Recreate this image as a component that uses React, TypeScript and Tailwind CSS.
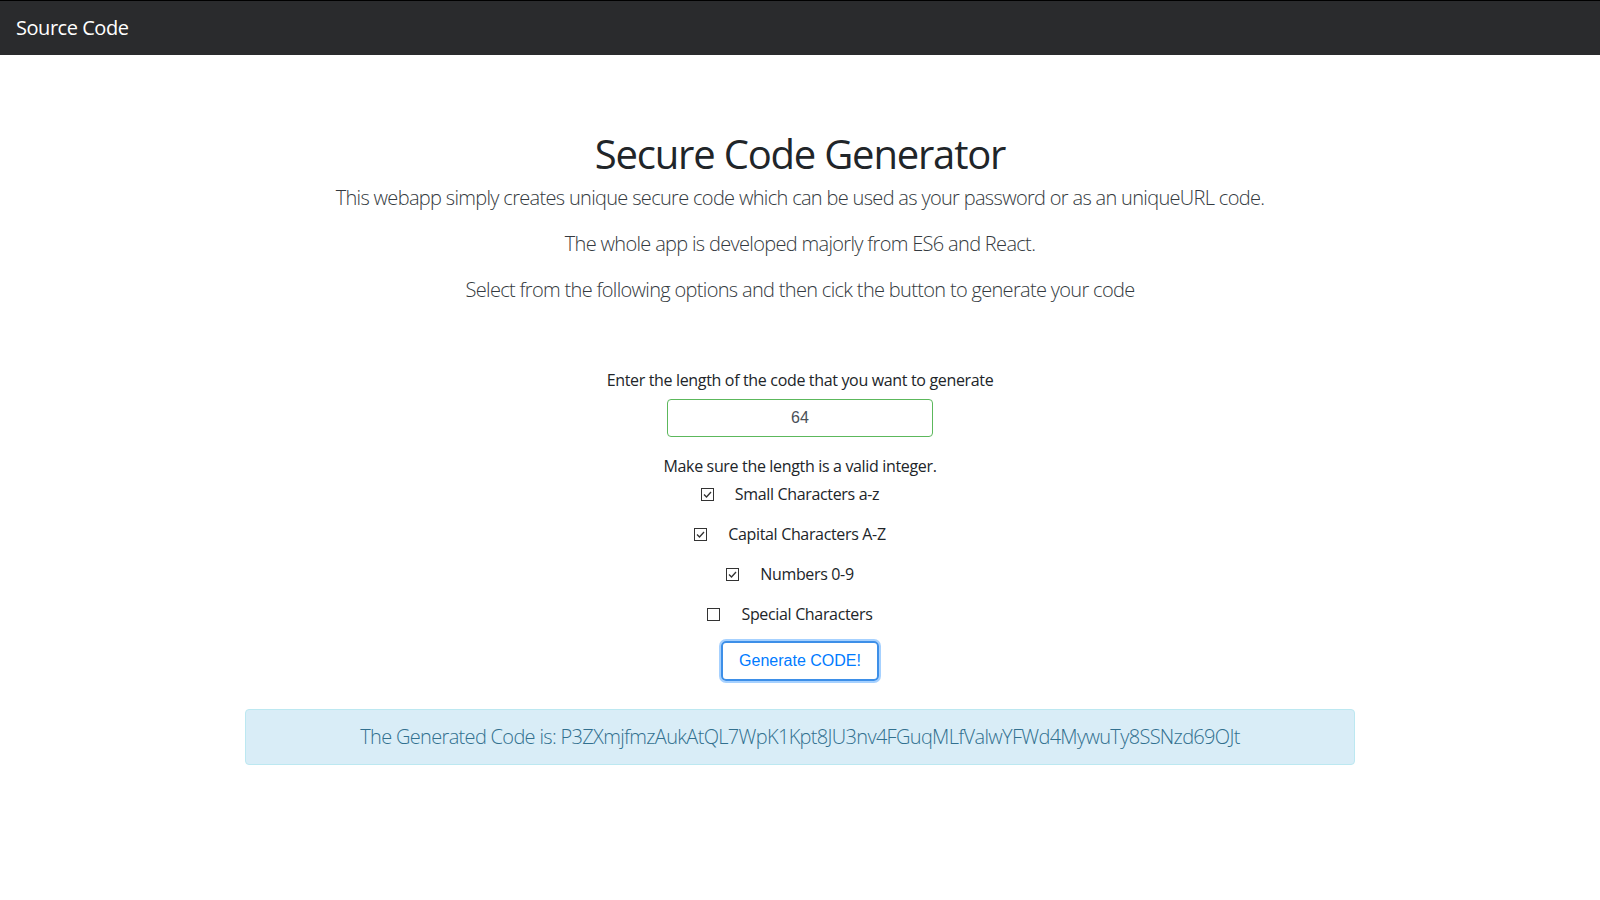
import React, { useState } from 'react'

const options = [
  { id: 'small', label: 'Small Characters a-z', checked: true },
  { id: 'capital', label: 'Capital Characters A-Z', checked: true },
  { id: 'numbers', label: 'Numbers 0-9', checked: true },
  { id: 'special', label: 'Special Characters', checked: false },
]

const CheckBox: React.FC<{ checked: boolean }> = ({ checked }) => (
  <span className="flex h-[13px] w-[13px] items-center justify-center border border-[#333] bg-white">
    {checked && (
      <svg viewBox="0 0 11 11" className="h-[11px] w-[11px]">
        <path d="M2 5.5 L4.5 8 L9 3" fill="none" stroke="#333" strokeWidth="1.3" />
      </svg>
    )}
  </span>
)

const App: React.FC = () => {
  const [length, setLength] = useState('64')
  const [opts, setOpts] = useState(options)

  return (
    <div className="min-h-screen bg-white font-['Open_Sans',sans-serif] text-[#212529]">
      {/* Navbar */}
      <nav className="flex h-[55px] items-center border-t border-black bg-[#2a2b2d] px-4">
        <span className="text-[20px] tracking-[-0.023em] text-white">Source Code</span>
      </nav>

      <div className="mx-auto flex w-[1140px] flex-col items-center px-[15px] pt-[75px]">
        {/* Header */}
        <h1 className="text-[40px] leading-[48px] font-normal tracking-[-0.03em] text-[#212529]">Secure Code Generator</h1>
        <p className="mt-[5px] text-[20px] leading-[30px] font-light tracking-[-0.034em] text-[#343a40]">
          This webapp simply creates unique secure code which can be used as your password or as an uniqueURL code.
        </p>
        <p className="mt-4 text-[20px] leading-[30px] font-light tracking-[-0.034em] text-[#343a40]">
          The whole app is developed majorly from ES6 and React.
        </p>
        <p className="mt-4 text-[20px] leading-[30px] font-light tracking-[-0.034em] text-[#343a40]">
          Select from the following options and then cick the button to generate your code
        </p>

        {/* Form */}
        <label className="mt-[63px] text-[16px] leading-6 tracking-[-0.021em]">
          Enter the length of the code that you want to generate
        </label>
        <input
          value={length}
          onChange={(e) => setLength(e.target.value)}
          className="mt-[7px] h-[38px] w-[266px] rounded border border-[#5cb85c] text-center font-['Liberation_Sans',sans-serif] text-[16px] text-[#495057] outline-none"
        />
        <p className="mt-[17px] text-[16px] leading-6 tracking-[-0.021em]">Make sure the length is a valid integer.</p>

        <div className="mt-1 flex flex-col gap-4">
          {opts.map((o, i) => (
            <label
              key={o.id}
              className="flex cursor-pointer items-center justify-center gap-[21px] pr-[20px] text-[16px] leading-6 tracking-[-0.021em]"
              onClick={() => setOpts(opts.map((x, j) => (j === i ? { ...x, checked: !x.checked } : x)))}
            >
              <CheckBox checked={o.checked} />
              <span>{o.label}</span>
            </label>
          ))}
        </div>

        <button className="mt-[15px] h-[40px] w-[158px] rounded-[5px] border-2 border-[#3d8fe8] font-['Liberation_Sans',sans-serif] text-[16px] text-[#007bff] shadow-[0_0_0_2px_rgba(0,123,255,0.35)]">
          Generate CODE!
        </button>

        {/* Result */}
        <div className="mt-[28px] w-full rounded border border-[#bce8f1] bg-[#d9edf7] py-3 text-center text-[20px] leading-[30px] font-light tracking-[-0.034em] text-[#31708f]">
          The Generated Code is: P3ZXmjfmzAukAtQL7WpK1Kpt8JU3nv4FGuqMLfValwYFWd4MywuTy8SSNzd69OJt
        </div>
      </div>
    </div>
  )
}

export default App
